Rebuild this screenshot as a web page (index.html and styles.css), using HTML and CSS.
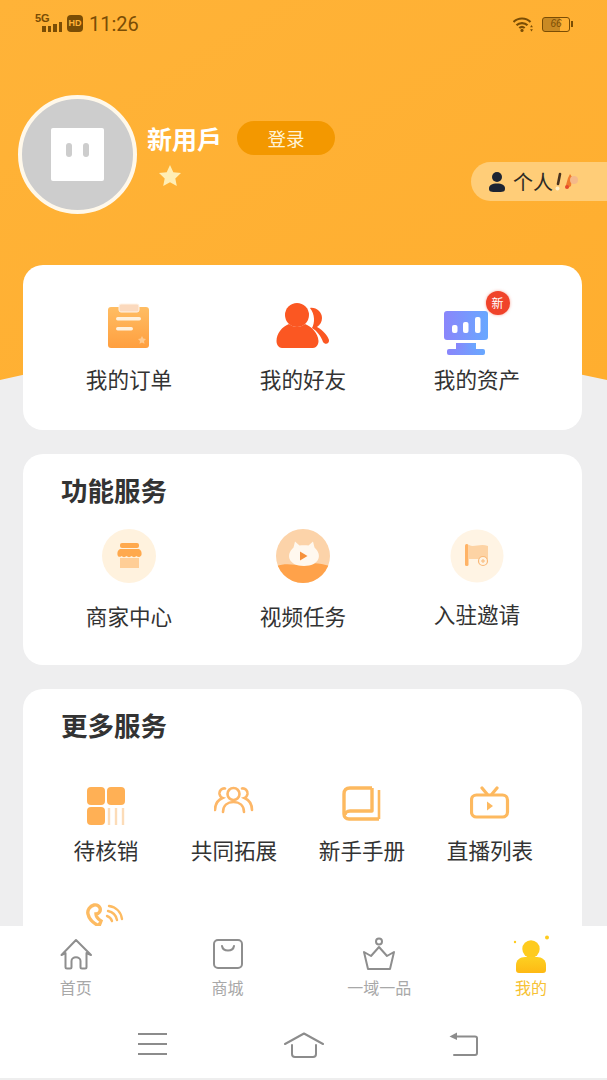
FILE: index.html
```html
<!DOCTYPE html>
<html lang="zh-CN">
<head>
    <meta charset="UTF-8">
    <meta name="viewport" content="width=device-width, initial-scale=1.0">
    <title>我的</title>
    <link rel="stylesheet" href="styles.css">
</head>
<body>
    <div class="page">
        <div class="scroll">
            <!-- orange backdrop with the curved lower edge -->
            <svg class="backdrop" width="607" height="400" viewBox="0 0 607 400">
                <defs>
                    <linearGradient id="heroFill" x1="0" y1="0" x2="1" y2="1">
                        <stop offset="0" stop-color="#ffb338"/>
                        <stop offset="1" stop-color="#ffae2f"/>
                    </linearGradient>
                </defs>
                <path d="M0 0H607V380Q303 310 0 380Z" fill="url(#heroFill)"/>
            </svg>

            <!-- Status bar -->
            <div class="status-bar">
                <div class="signal">
                    <span class="signal-label">5G</span>
                    <span class="signal-bars"><i></i><i></i><i></i><i></i></span>
                </div>
                <span class="hd-badge">HD</span>
                <span class="clock">11:26</span>
                <svg class="wifi" width="20" height="15" viewBox="0 0 20 15">
                    <g fill="none" stroke="#7a4d05" stroke-width="2.200">
                        <path d="M0.500 5C5 0.300 13 0.300 17.500 5"/>
                        <path d="M3.500 8.200C6.300 5.300 11.700 5.300 14.500 8.200"/>
                        <path d="M6.300 11C8 9.500 10 9.500 11.700 11"/>
                    </g>
                    <circle cx="9" cy="13.400" r="1.600" fill="#7a4d05"/>
                    <path d="M18.500 8l1.400 2.200h-2.800zM18.500 14.500l1.400-2.200h-2.800z" fill="#7a4d05"/>
                </svg>
                <div class="battery"><span class="battery-level">66</span></div>
            </div>

            <!-- Profile -->
            <div class="profile">
                <div class="avatar">
                    <div class="avatar-face"><i></i><i></i></div>
                </div>
                <div class="profile-info">
                    <div class="profile-top">
                        <span class="profile-name">新用戶</span>
                        <button class="login-btn">登录</button>
                    </div>
                    <svg class="profile-star" width="24" height="24" viewBox="0 0 24 24">
                        <path d="M12 1l3.300 7.200 7.700.9-5.700 5.300 1.500 7.700L12 18.200l-6.800 3.900 1.500-7.700L1 9.100l7.700-.9z" fill="#ffeeb5"/>
                    </svg>
                </div>
                <div class="personal-pill">
                    <svg width="18" height="22" viewBox="0 0 18 22">
                        <circle cx="9" cy="6" r="5" fill="#1d2433"/>
                        <path d="M1 17.500C1 14 4 12.500 9 12.500S17 14 17 17.500 15 21 9 21 1 21 1 17.500Z" fill="#1d2433"/>
                    </svg>
                    <span class="personal-text">个人</span>
                    <svg class="personal-note" width="24" height="22" viewBox="0 0 24 22">
                        <path d="M6 3L4 13" stroke="#4a3420" stroke-width="2.600" stroke-linecap="round"/>
                        <circle cx="3.500" cy="17.500" r="2" fill="#fff0c8"/>
                        <path d="M14 7l2-4 2 3-1 9-3 2-2-3z" fill="#ef7a2c"/>
                        <circle cx="20" cy="9" r="4" fill="#f5b98a"/>
                        <circle cx="13" cy="16" r="2" fill="#e6492b"/>
                    </svg>
                </div>
            </div>

            <!-- Orders, friends, assets -->
            <section class="card card-main">
                <div class="grid-three">
                    <div class="item">
                        <div class="main-icon">
                            <svg width="44" height="46" viewBox="0 0 44 46">
                                <defs>
                                    <linearGradient id="clipFill" x1="0" y1="0" x2="0" y2="1">
                                        <stop offset="0" stop-color="#ffbd63"/>
                                        <stop offset="1" stop-color="#ff9f3f"/>
                                    </linearGradient>
                                </defs>
                                <rect x="1" y="4" width="41" height="41" rx="3" fill="url(#clipFill)"/>
                                <rect x="12" y="1" width="20" height="8" rx="2" fill="#fbd9bd" stroke="#fff3e6"/>
                                <rect x="9" y="14" width="25" height="3.400" rx="1.700" fill="#fff1dd"/>
                                <rect x="9" y="24" width="17" height="3.400" rx="1.700" fill="#fff1dd"/>
                                <path d="M35 33l1.300 2.600 2.700.4-2 2 .5 2.800-2.500-1.300-2.500 1.300.5-2.800-2-2 2.700-.4z" fill="#ffc98c"/>
                            </svg>
                        </div>
                        <span class="label">我的订单</span>
                    </div>
                    <div class="item">
                        <div class="main-icon">
                            <svg width="54" height="46" viewBox="0 0 54 46">
                                <circle cx="21" cy="12" r="12" fill="#fb5722"/>
                                <path d="M0.500 38C0.500 30 6 24 13 21C18 25 24 25 29 21C36 24 42 30 42.500 38C42.500 42 40 45 37 45H6C3 45 0.500 42 0.500 38Z" fill="#fb5722"/>
                                <path d="M34 5C40 4 46 9 46 15C46 19 44 22 41 24C47 27 52 33 53 37C53.500 41 49 42 47 39C45 33 41 28 36 25C39 20 39 11 34 5Z" fill="#fb5722"/>
                            </svg>
                        </div>
                        <span class="label">我的好友</span>
                    </div>
                    <div class="item">
                        <div class="main-icon main-icon-low">
                            <svg width="46" height="46" viewBox="0 0 46 46">
                                <defs>
                                    <linearGradient id="screenFill" x1="0" y1="0" x2="1" y2="0">
                                        <stop offset="0" stop-color="#8a86fb"/>
                                        <stop offset="1" stop-color="#68a8ff"/>
                                    </linearGradient>
                                </defs>
                                <rect x="1" y="1" width="44" height="29" rx="3" fill="url(#screenFill)"/>
                                <rect x="9" y="15" width="5.500" height="8" rx="2" fill="#fff"/>
                                <rect x="20" y="12" width="5.500" height="11" rx="2" fill="#fff"/>
                                <rect x="32" y="7" width="5.500" height="16" rx="2" fill="#fff"/>
                                <rect x="13" y="33" width="20" height="7" fill="url(#screenFill)"/>
                                <rect x="4" y="39" width="38" height="6" rx="2" fill="url(#screenFill)"/>
                            </svg>
                            <span class="new-badge">新</span>
                        </div>
                        <span class="label">我的资产</span>
                    </div>
                </div>
            </section>

            <!-- Feature services -->
            <section class="card card-feature">
                <h2 class="card-title">功能服务</h2>
                <div class="grid-three feature-grid">
                    <div class="item">
                        <svg class="round-icon" width="54" height="54" viewBox="0 0 54 54">
                            <circle cx="27" cy="27" r="27" fill="#fff2de"/>
                            <rect x="18" y="14" width="19" height="5" rx="2" fill="#ffa94d"/>
                            <path d="M18 20H37C39 21 40 23 39.500 26C38 28.500 36 28.500 34.500 27C33 28.500 31 28.500 29.500 27C28 28.500 26 28.500 24.500 27C23 28.500 21 28.500 19.500 27C18 28.500 16 28 15.500 26C15 23 16 21 18 20Z" fill="#ffa94d"/>
                            <rect x="18" y="29" width="19" height="10" fill="#ffce96"/>
                        </svg>
                        <span class="label">商家中心</span>
                    </div>
                    <div class="item">
                        <svg class="round-icon" width="54" height="54" viewBox="0 0 54 54">
                            <defs><clipPath id="videoClip"><circle cx="27" cy="27" r="27"/></clipPath></defs>
                            <g clip-path="url(#videoClip)">
                                <rect width="54" height="54" fill="#fcd3a9"/>
                                <path d="M0 37C12 33 20 37 28 36C36 33 44 34 54 37V54H0Z" fill="#ffa24a"/>
                            </g>
                            <path d="M19 12.500L23.500 16.500C26 16 30 16 32.500 16.500L37 12.500L38.500 18.500C47 26 43 37 28 37C13 37 9 26 17.500 18.500Z" fill="#fff8ef"/>
                            <path d="M24 22.500l7.500 4.500-7.500 4.500Z" fill="#f6913c"/>
                        </svg>
                        <span class="label">视频任务</span>
                    </div>
                    <div class="item">
                        <svg class="round-icon" width="54" height="54" viewBox="0 0 54 54">
                            <circle cx="27" cy="27" r="26.500" fill="#fff4e4"/>
                            <rect x="15" y="15" width="3.500" height="22" rx="1.500" fill="#ffb366"/>
                            <path d="M19 16C24 19 30 14 38 17V30H19Z" fill="#fdd3a4"/>
                            <circle cx="33" cy="32" r="4.500" fill="#fff4e4" stroke="#f9b877" stroke-width="1.200"/>
                            <path d="M33 30v4M31 32h4" stroke="#f9b877" stroke-width="1"/>
                        </svg>
                        <span class="label label-raised">入驻邀请</span>
                    </div>
                </div>
            </section>

            <!-- More services -->
            <section class="card card-more">
                <h2 class="card-title">更多服务</h2>
                <div class="grid-four">
                    <div class="item">
                        <svg class="more-icon" width="40" height="40" viewBox="0 0 40 40">
                            <rect x="1" y="1" width="18" height="18" rx="4" fill="#ffb055"/>
                            <rect x="21" y="1" width="18" height="18" rx="4" fill="#ffb055"/>
                            <rect x="1" y="21" width="18" height="18" rx="4" fill="#ffb055"/>
                            <path d="M23 22V39M30 22V39M37 22V39" stroke="#fcdcb8" stroke-width="2.400"/>
                        </svg>
                        <span class="label">待核销</span>
                    </div>
                    <div class="item">
                        <svg class="more-icon" width="40" height="40" viewBox="0 0 40 40">
                            <g fill="none" stroke="#fdb768" stroke-width="2.600" stroke-linecap="round">
                                <circle cx="19.500" cy="8" r="6"/>
                                <path d="M9 26C9 19 14 16 19.500 16S30 19 30 26"/>
                                <path d="M11 2.500C8 2 5 4.500 5.500 8C6 10 7 11.500 8.500 12C4 14 1 18 1 24"/>
                                <path d="M28 2.500C31 2 34 4.500 33.500 8C33 10 32 11.500 30.500 12C35 14 38 18 38 24"/>
                            </g>
                        </svg>
                        <span class="label">共同拓展</span>
                    </div>
                    <div class="item">
                        <svg class="more-icon" width="40" height="40" viewBox="0 0 40 40">
                            <g fill="none" stroke="#fdb95f" stroke-width="3.400" stroke-linejoin="round">
                                <path d="M30 2H8C4 2 2 4 2 8V28C2 31 4 33 7 33H37"/>
                                <path d="M30 2V25H8C5 25 3 27 3 29"/>
                                <path d="M37 4V33" stroke-width="2.600"/>
                            </g>
                        </svg>
                        <span class="label">新手手册</span>
                    </div>
                    <div class="item">
                        <svg class="more-icon" width="40" height="40" viewBox="0 0 40 40">
                            <g fill="none" stroke="#fdb95f" stroke-width="3.200" stroke-linecap="round">
                                <rect x="1.500" y="9" width="36" height="22" rx="5"/>
                                <path d="M12 2L17 8M27 2L22 8"/>
                            </g>
                            <path d="M17 15.500l6 4.500-6 4.500Z" fill="#fdb95f"/>
                        </svg>
                        <span class="label">直播列表</span>
                    </div>
                    <div class="item">
                        <svg class="more-icon" width="40" height="40" viewBox="0 0 40 40">
                            <g fill="none" stroke="#fdbb62" stroke-linecap="round">
                                <path d="M8 2C4 3 1 7 2 11C3 16 7 20 13 23L15 18C12 16 10 13 10 11C13 11 15 8 14 5C13 3 11 1.500 8 2Z" stroke-width="3.400"/>
                                <path d="M23 3C30 4 35 9 36 16" stroke-width="2.400"/>
                                <path d="M22 8C27 9 30 12 31 17" stroke-width="2.400"/>
                                <path d="M21 13C24 14 25 15 26 18" stroke-width="2.400"/>
                            </g>
                        </svg>
                    </div>
                </div>
            </section>
        </div>

        <!-- Tab bar -->
        <nav class="tabbar">
            <div class="tab">
                <svg width="40" height="36" viewBox="0 0 40 36">
                    <g fill="none" stroke="#8e8e8e" stroke-width="2" stroke-linejoin="round" stroke-linecap="round">
                        <path d="M5.500 19L20 4L35 19L30.500 17V31C30.500 32 29.500 32.500 29 32.500H26C25 32.500 24.500 32 24.500 31V25C24.500 20 15.500 20 15.500 25V31C15.500 32 15 32.500 14 32.500H11C10.500 32.500 9.500 32 9.500 31V17Z"/>
                    </g>
                </svg>
                <span class="tab-label">首页</span>
            </div>
            <div class="tab">
                <svg width="40" height="36" viewBox="0 0 40 36">
                    <g fill="none" stroke="#8e8e8e" stroke-width="2" stroke-linecap="round">
                        <rect x="6" y="4" width="28" height="28" rx="4"/>
                        <path d="M14 10C15 16 25 16 26 10"/>
                    </g>
                </svg>
                <span class="tab-label">商城</span>
            </div>
            <div class="tab">
                <svg width="40" height="36" viewBox="0 0 40 36">
                    <g fill="none" stroke="#8e8e8e" stroke-width="2" stroke-linejoin="round">
                        <circle cx="20" cy="5.500" r="3"/>
                        <path d="M5 16L12 20L20 11L28 20L35 16L31 33H9Z"/>
                    </g>
                </svg>
                <span class="tab-label">一域一品</span>
            </div>
            <div class="tab tab-active">
                <svg width="40" height="38" viewBox="0 0 40 38">
                    <defs>
                        <linearGradient id="meFill" x1="0" y1="0" x2="0" y2="1">
                            <stop offset="0" stop-color="#fdd021"/>
                            <stop offset="1" stop-color="#feb914"/>
                        </linearGradient>
                    </defs>
                    <circle cx="20" cy="14" r="8.700" fill="#fecb1e"/>
                    <path d="M5 30C5 25 9 22 14 22H26C31 22 35 25 35 30V35C35 37 34 38 32 38H8C6 38 5 37 5 35Z" fill="url(#meFill)"/>
                    <circle cx="36" cy="2.500" r="2" fill="#fecb1e"/>
                    <circle cx="4" cy="7" r="1.200" fill="#fecb1e"/>
                </svg>
                <span class="tab-label">我的</span>
            </div>
        </nav>

        <!-- System navigation -->
        <div class="system-nav">
            <svg class="nav-icon" width="29" height="24" viewBox="0 0 29 24">
                <path d="M0 2H29M0 12H29M0 22H29" stroke="#8c8c8c" stroke-width="2"/>
            </svg>
            <svg class="nav-icon nav-home" width="40" height="26" viewBox="0 0 40 26">
                <g fill="none" stroke="#8c8c8c" stroke-width="2" stroke-linecap="round" stroke-linejoin="round">
                    <path d="M1 12L20 1.500L39 12"/>
                    <path d="M8 13V22C8 24 9 25 11 25H29C31 25 32 24 32 22V13"/>
                </g>
            </svg>
            <svg class="nav-icon" width="29" height="24" viewBox="0 0 29 24">
                <g fill="none" stroke="#8c8c8c" stroke-width="2" stroke-linecap="round">
                    <path d="M5 23H26C27.500 23 28 22.500 28 21V6C28 5 27.500 4.500 26 4.500H6"/>
                </g>
                <path d="M8 0.500V8L0.500 4.500Z" fill="#8c8c8c"/>
            </svg>
        </div>
        <div class="bottom-strip"></div>
    </div>
</body>
</html>
```

FILE: styles.css
```css
* {
    box-sizing: border-box;
}
body {
    margin: 0;
    background-color: #fff;
    font-family: "Noto Sans CJK SC", "Noto Sans", sans-serif;
}
.page {
    width: 607px;
    height: 1080px;
    display: flex;
    flex-direction: column;
    overflow: hidden;
}
.scroll {
    position: relative;
    height: 926px;
    flex: none;
    overflow: hidden;
    background-color: #eeeeef;
}
.backdrop {
    position: absolute;
    top: 0;
    left: 0;
}

/* status bar */
.status-bar {
    position: relative;
    height: 50px;
    padding: 15px 35px 0;
    display: flex;
    align-items: flex-start;
    color: #7a4d05;
}
.signal {
    position: relative;
    width: 28px;
    height: 17px;
}
.signal-label {
    display: block;
    font-family: "Liberation Sans", sans-serif;
    font-size: 11px;
    font-weight: 700;
    line-height: 7px;
}
.signal-bars {
    display: flex;
    align-items: flex-end;
    gap: 2px;
    height: 10px;
    margin: 0 0 0 7px;
}
.signal-bars i {
    width: 3.500px;
    height: 6px;
    background-color: #7a4d05;
}
.signal-bars i:nth-child(3) {
    height: 8px;
}
.signal-bars i:nth-child(4) {
    height: 10px;
}
.hd-badge {
    width: 16px;
    height: 17px;
    margin-left: 4px;
    border-radius: 4px;
    background-color: #7a4d05;
    color: #ffb338;
    font-family: "Liberation Sans", sans-serif;
    font-size: 9px;
    font-weight: 700;
    line-height: 17px;
    text-align: center;
}
.clock {
    margin-left: 6px;
    margin-top: -3px;
    font-family: Roboto, sans-serif;
    font-size: 20px;
    line-height: 25px;
}
.wifi {
    margin-left: auto;
    margin-top: 2px;
    margin-right: 9px;
}
.battery {
    position: relative;
    width: 28px;
    height: 15px;
    margin-top: 2px;
    margin-right: 2px;
    border: 1.500px solid #7a4d05;
    border-radius: 3px;
    background: linear-gradient(90deg, #c98a24 0, #c98a24 66%, transparent 66%);
    font-family: "Liberation Sans", sans-serif;
    font-size: 10px;
    font-style: italic;
    line-height: 12px;
    text-align: center;
}
.battery::after {
    content: "";
    position: absolute;
    top: 3px;
    right: -4px;
    width: 2px;
    height: 6px;
    background-color: #7a4d05;
}

/* profile */
.profile {
    position: relative;
    display: flex;
    align-items: flex-start;
    margin-top: 45px;
    padding-left: 18px;
}
.avatar {
    width: 119px;
    height: 119px;
    flex: none;
    display: flex;
    align-items: center;
    justify-content: center;
    border: 4px solid #fff8ea;
    border-radius: 50%;
    background-color: #cdcdcd;
}
.avatar-face {
    width: 53px;
    height: 53px;
    display: flex;
    justify-content: center;
    align-items: flex-start;
    gap: 11px;
    padding-top: 15px;
    border-radius: 2px;
    background-color: #fff;
}
.avatar-face i {
    width: 6px;
    height: 14px;
    border-radius: 3px;
    background-color: #cdcdcd;
}
.profile-info {
    margin-left: 10px;
    padding-top: 26px;
}
.profile-top {
    display: flex;
    align-items: center;
    gap: 15px;
}
.profile-name {
    color: #fff;
    font-size: 25px;
    font-weight: 700;
    line-height: 34px;
    white-space: nowrap;
}
.login-btn {
    width: 98px;
    height: 34px;
    padding: 0;
    border: none;
    border-radius: 17px;
    background-color: #f39800;
    color: #fff3d6;
    font-family: inherit;
    font-size: 18.500px;
    line-height: 34px;
}
.profile-star {
    display: block;
    margin: 9px 0 0 11px;
}
.personal-pill {
    display: flex;
    align-items: center;
    width: 136px;
    height: 39px;
    margin-top: 67px;
    margin-left: auto;
    padding-left: 17px;
    border-radius: 20px 0 0 20px;
    background-color: #ffcd78;
}
.personal-text {
    margin-left: 7px;
    color: #2c2a25;
    font-size: 20px;
    line-height: 39px;
    white-space: nowrap;
}
.personal-note {
    margin-left: 1px;
}

/* cards */
.card {
    position: relative;
    margin: 0 25px 24px 23px;
    border-radius: 20px;
    background-color: #fff;
}
.card-main {
    height: 165px;
    margin-top: 51px;
    padding: 38px 19px 0;
}
.card-feature {
    height: 211px;
    padding: 18px 19px 0;
}
.card-more {
    padding: 18px 28px 60px 19px;
}
.card-title {
    margin: 0 0 0 19px;
    color: #333;
    font-size: 26.500px;
    font-weight: 700;
    line-height: 36px;
}
.grid-three {
    display: grid;
    grid-template-columns: repeat(3, 174px);
}
.grid-four {
    display: grid;
    grid-template-columns: repeat(4, 128px);
    row-gap: 38px;
    margin-top: 43px;
}
.feature-grid {
    margin-top: 21px;
}
.item {
    display: flex;
    flex-direction: column;
    align-items: center;
}
.label {
    color: #333;
    font-size: 21.600px;
    line-height: 30px;
    white-space: nowrap;
}
.label-raised {
    margin-top: -2px;
}
.main-icon {
    position: relative;
    height: 53px;
    margin-bottom: 8px;
    display: flex;
    align-items: flex-start;
}
.main-icon svg {
    display: block;
}
.main-icon-low {
    align-items: flex-end;
    margin-right: 23px;
}
.new-badge {
    position: absolute;
    top: -12px;
    right: -21px;
    width: 24px;
    height: 24px;
    border-radius: 50%;
    background-color: #f0432a;
    box-shadow: 0 0 3px rgba(240, 67, 42, 0.5);
    color: #fff;
    font-size: 12px;
    line-height: 24px;
    text-align: center;
}
.round-icon {
    display: block;
    margin-bottom: 18px;
}
.more-icon {
    display: block;
    margin-bottom: 9px;
}

/* tab bar */
.tabbar {
    height: 89px;
    flex: none;
    display: grid;
    grid-template-columns: repeat(4, 1fr);
    padding-top: 9px;
    background-color: #fff;
}
.tab {
    display: flex;
    flex-direction: column;
    align-items: center;
}
.tab svg {
    display: block;
    height: 38px;
}
.tab-label {
    margin-top: 3px;
    color: #a8a8a8;
    font-size: 16px;
    line-height: 22px;
}
.tab-active .tab-label {
    color: #f7c234;
}

/* system navigation */
.system-nav {
    height: 63px;
    flex: none;
    display: flex;
    align-items: flex-start;
    padding: 17px 0 0 138px;
    background-color: #fff;
}
.nav-icon {
    display: block;
}
.nav-home {
    margin: 0 125px 0 117px;
}
.bottom-strip {
    height: 2px;
    flex: none;
    background-color: #eeeeee;
}
```
